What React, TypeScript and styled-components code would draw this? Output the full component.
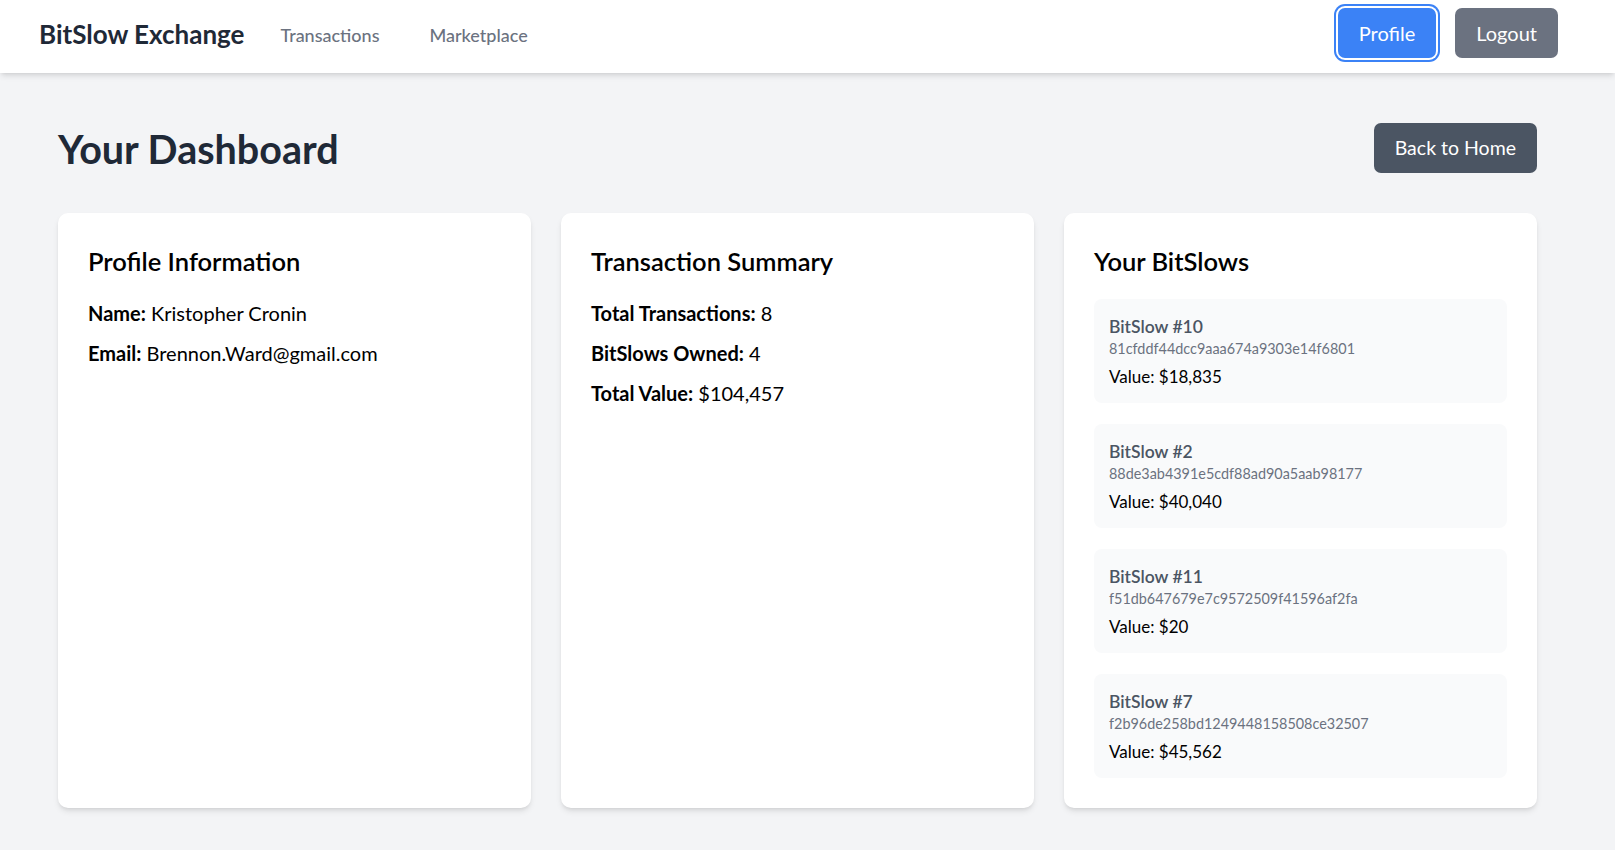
import React from "react";
import styled, { createGlobalStyle } from "styled-components";

const GlobalStyle = createGlobalStyle`
  html, body {
    margin: 0;
    padding: 0;
    background: #f3f4f6;
    font-family: "Segoe UI", Lato, "Noto Sans", sans-serif;
    color: #000;
  }
  * { box-sizing: border-box; }
`;

const bitslows = [
  { id: 10, hash: "81cfddf44dcc9aaa674a9303e14f6801", value: 18835 },
  { id: 2, hash: "88de3ab4391e5cdf88ad90a5aab98177", value: 40040 },
  { id: 11, hash: "f51db647679e7c9572509f41596af2fa", value: 20 },
  { id: 7, hash: "f2b96de258bd1249448158508ce32507", value: 45562 },
];

const money = (n: number) => "$" + n.toLocaleString("en-US");

const Page = styled.div`
  min-height: 100vh;
  background: #f3f4f6;
`;

const NavBar = styled.nav`
  height: 73px;
  padding: 0 57px 8px 39px;
  display: flex;
  align-items: center;
  background: #fff;
  box-shadow: 0 4px 6px -1px rgba(0, 0, 0, 0.1), 0 2px 4px -2px rgba(0, 0, 0, 0.1);
  position: relative;
  z-index: 1;
`;

const Logo = styled.div`
  font-size: 26px;
  font-weight: 700;
  color: #1f2937;
  line-height: 32px;
  padding-top: 3px;
  margin-right: 36px;
`;

const NavLinks = styled.div`
  display: flex;
  gap: 50px;
  flex: 1;
  padding-top: 5px;
`;

const NavLink = styled.a`
  font-size: 18px;
  font-weight: 500;
  color: #6b7280;
  text-decoration: none;
  line-height: 26px;
  cursor: pointer;
`;

const NavActions = styled.div`
  display: flex;
  align-items: center;
  gap: 19px;
`;

const Button = styled.button<{ $tone: "blue" | "gray" | "dark"; $focused?: boolean }>`
  height: 50px;
  padding: 0 21px;
  border: none;
  border-radius: 7px;
  font-family: inherit;
  font-size: 20px;
  line-height: 28px;
  color: #fff;
  cursor: pointer;
  background: ${(p) =>
    p.$tone === "blue" ? "#3b82f6" : p.$tone === "gray" ? "#6b7280" : "#4b5563"};
  box-shadow: ${(p) => (p.$focused ? "0 0 0 2px #fff, 0 0 0 4px #3b82f6" : "none")};
`;

const HomeButton = styled(Button)`
  font-size: 19.5px;
`;

const Main = styled.main`
  padding: 50px 78px 42px 58px;
`;

const Header = styled.div`
  display: flex;
  align-items: center;
  justify-content: space-between;
  margin-bottom: 40px;
`;

const Title = styled.h1`
  margin: 0;
  font-size: 39.5px;
  font-weight: 700;
  line-height: 47px;
  color: #1f2937;
`;

const Grid = styled.div`
  display: grid;
  grid-template-columns: repeat(3, 1fr);
  gap: 30px;
`;

const Card = styled.section`
  background: #fff;
  border-radius: 10px;
  padding: 30px;
  box-shadow: 0 4px 6px -1px rgba(0, 0, 0, 0.1), 0 2px 4px -2px rgba(0, 0, 0, 0.1);
`;

const CardTitle = styled.h2`
  margin: 0 0 19px;
  font-size: 25.5px;
  font-weight: 600;
  line-height: 37px;
  color: #000;
`;

const Line = styled.p`
  margin: 0 0 12px;
  font-size: 20px;
  line-height: 28px;

  strong {
    font-weight: 700;
  }
`;

const CoinList = styled.div`
  display: flex;
  flex-direction: column;
  gap: 21px;
`;

const Coin = styled.div`
  background: #f9fafb;
  border-radius: 8px;
  padding: 16px 15px 14px;
`;

const CoinName = styled.div`
  font-size: 17.5px;
  font-weight: 600;
  line-height: 24px;
  color: #4b5563;
`;

const CoinHash = styled.div`
  font-size: 14.4px;
  line-height: 19px;
  color: #6b7280;
`;

const CoinValue = styled.div`
  margin-top: 7px;
  font-size: 17px;
  line-height: 24px;
  color: #000;
`;

export default function App() {
  const total = bitslows.reduce((s, b) => s + b.value, 0);
  return (
    <Page>
      <GlobalStyle />
      <NavBar>
        <Logo>BitSlow Exchange</Logo>
        <NavLinks>
          <NavLink>Transactions</NavLink>
          <NavLink>Marketplace</NavLink>
        </NavLinks>
        <NavActions>
          <Button $tone="blue" $focused>
            Profile
          </Button>
          <Button $tone="gray">Logout</Button>
        </NavActions>
      </NavBar>
      <Main>
        <Header>
          <Title>Your Dashboard</Title>
          <HomeButton $tone="dark">Back to Home</HomeButton>
        </Header>
        <Grid>
          <Card>
            <CardTitle>Profile Information</CardTitle>
            <Line>
              <strong>Name:</strong> Kristopher Cronin
            </Line>
            <Line>
              <strong>Email:</strong> Brennon.Ward@gmail.com
            </Line>
          </Card>
          <Card>
            <CardTitle>Transaction Summary</CardTitle>
            <Line>
              <strong>Total Transactions:</strong> 8
            </Line>
            <Line>
              <strong>BitSlows Owned:</strong> {bitslows.length}
            </Line>
            <Line>
              <strong>Total Value:</strong> {money(total)}
            </Line>
          </Card>
          <Card>
            <CardTitle>Your BitSlows</CardTitle>
            <CoinList>
              {bitslows.map((b) => (
                <Coin key={b.id}>
                  <CoinName>BitSlow #{b.id}</CoinName>
                  <CoinHash>{b.hash}</CoinHash>
                  <CoinValue>Value: {money(b.value)}</CoinValue>
                </Coin>
              ))}
            </CoinList>
          </Card>
        </Grid>
      </Main>
    </Page>
  );
}
